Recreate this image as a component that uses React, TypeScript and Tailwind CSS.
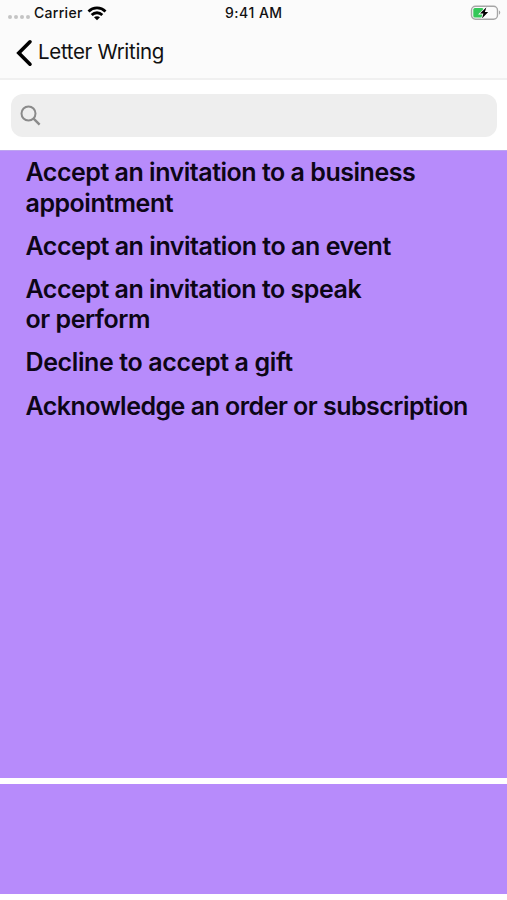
const topics = [
  { lines: ["Accept an invitation to a business", "appointment"], spacing: "tracking-[-0.48px]" },
  { lines: ["Accept an invitation to an event"], spacing: "tracking-[-0.46px]" },
  { lines: ["Accept an invitation to speak", "or perform"], spacing: "tracking-[-0.48px]" },
  { lines: ["Decline to accept a gift"], spacing: "tracking-[-0.38px]" },
  { lines: ["Acknowledge an order or subscription"], spacing: "tracking-[-0.52px]" },
];

const WifiIcon = () => (
  <svg width="20" height="15" viewBox="0 0 20 15" fill="none" stroke="#000" strokeWidth="2.8">
    <path d="M1.5 5.4 C6.2 0.8 13.8 0.8 18.5 5.4" />
    <path d="M4.7 8.9 C7.7 6 12.3 6 15.3 8.9" />
    <path d="M10 14.3 L7 11.3 C8.6 9.8 11.4 9.8 13 11.3 Z" fill="#000" stroke="none" />
  </svg>
);

const BatteryIcon = () => (
  <svg width="31" height="16" viewBox="0 0 31 16" fill="none">
    <rect x="1.5" y="1.2" width="26" height="13" rx="4" stroke="#a6a6a6" strokeWidth="1.4" />
    <path d="M29 5.6 C30.7 6.3 30.7 9.1 29 9.8 Z" fill="#a6a6a6" />
    <rect x="3.3" y="3" width="10.2" height="9.4" rx="1.5" fill="#35c759" />
    <path
      d="M16.4 2.2 L10 8.6 H13.4 L12 13.4 L18.2 6.9 H14.9 Z"
      fill="#000"
      stroke="#fff"
      strokeWidth="1.6"
      paintOrder="stroke"
    />
  </svg>
);

const StatusBar = () => (
  <div className="relative flex h-[26px] items-center justify-between pl-2 pr-1.5 text-[14px] font-medium text-[#111]">
    <div className="flex items-center">
      <div className="mt-2 flex gap-[2px]">
        <span className="h-[4px] w-[4px] rounded-full bg-[#c4c4c4]" />
        <span className="h-[4px] w-[4px] rounded-full bg-[#c4c4c4]" />
        <span className="h-[4px] w-[4px] rounded-full bg-[#c4c4c4]" />
        <span className="h-[4px] w-[4px] rounded-full bg-[#c4c4c4]" />
      </div>
      <span className="-mt-px ml-1 mr-1 tracking-[0.3px]">Carrier</span>
      <WifiIcon />
    </div>
    <span className="absolute left-[225px] top-[2px] whitespace-nowrap tracking-[0.5px]">9:41 AM</span>
    <BatteryIcon />
  </div>
);

const App = () => {
  return (
    <div className="flex h-[900px] w-[507px] flex-col overflow-hidden bg-white font-['Inter',sans-serif]">
      <header className="h-20 border-b-2 border-[#f0f0f0] bg-[#fbfbfb]">
        <StatusBar />
        <div className="flex h-[53px] items-center pl-4 text-[#111]">
          <svg width="17" height="28" viewBox="0 0 17 28" fill="none" stroke="#000" strokeWidth="3.6">
            <path d="M14 2.8 L2.8 14 L14 25.2" strokeLinecap="round" />
          </svg>
          <span className="ml-[5px] text-[20.5px] tracking-[-0.32px]">Letter Writing</span>
        </div>
      </header>

      {/* Search field */}
      <div className="h-[70px] pl-[11px] pr-[10px] pt-[14px]">
        <div className="flex h-[43px] items-center rounded-[12px] bg-[#eee] pl-[9px]">
          <svg width="21" height="21" viewBox="0 0 21 21" fill="none" stroke="#8a8a8a" strokeWidth="2">
            <circle cx="8.5" cy="8.5" r="7" />
            <path d="M13.6 13.6 L19.6 19.6" strokeWidth="2.4" />
          </svg>
        </div>
      </div>

      <main className="h-[628px] border-t border-[#bda4f0] bg-[#b78bfb] pl-[25.5px] pt-[6px]">
        <ul className="flex flex-col gap-[12.5px] text-[25px] font-semibold leading-[30.6px] text-[#0d0616]">
          {topics.map((topic) => (
            <li key={topic.lines[0]} className={topic.spacing}>
              {topic.lines.map((line) => (
                <span key={line} className="block whitespace-nowrap">
                  {line}
                </span>
              ))}
            </li>
          ))}
        </ul>
      </main>

      <div className="mt-[6px] h-[110px] bg-[#b78bfb]" />
    </div>
  );
};

export default App;
